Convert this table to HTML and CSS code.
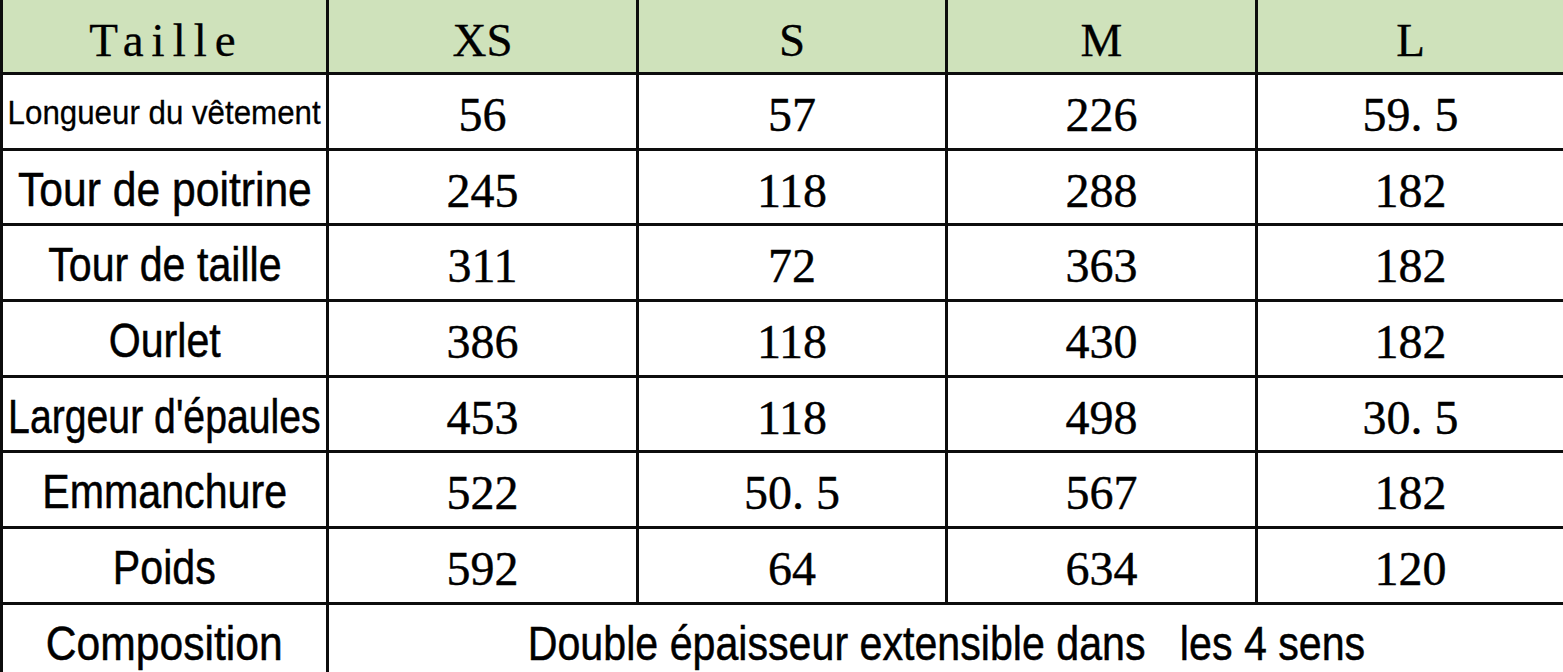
FILE: index.html
```html
<!DOCTYPE html>
<html lang="fr">
<head>
<meta charset="utf-8">
<title>Tableau des tailles</title>
<link rel="stylesheet" href="styles.css">
</head>
<body>
<div class="sheet">
  <div class="cell head label-head">Taille</div>
  <div class="cell head">XS</div>
  <div class="cell head">S</div>
  <div class="cell head">M</div>
  <div class="cell head">L</div>

  <div class="cell label small"><span class="txt">Longueur du vêtement</span></div>
  <div class="cell num">56</div>
  <div class="cell num">57</div>
  <div class="cell num">226</div>
  <div class="cell num">59. 5</div>

  <div class="cell label"><span class="txt wide">Tour de poitrine</span></div>
  <div class="cell num">245</div>
  <div class="cell num">118</div>
  <div class="cell num">288</div>
  <div class="cell num">182</div>

  <div class="cell label"><span class="txt">Tour de taille</span></div>
  <div class="cell num">311</div>
  <div class="cell num">72</div>
  <div class="cell num">363</div>
  <div class="cell num">182</div>

  <div class="cell label"><span class="txt">Ourlet</span></div>
  <div class="cell num">386</div>
  <div class="cell num">118</div>
  <div class="cell num">430</div>
  <div class="cell num">182</div>

  <div class="cell label"><span class="txt tight">Largeur d'épaules</span></div>
  <div class="cell num">453</div>
  <div class="cell num">118</div>
  <div class="cell num">498</div>
  <div class="cell num">30. 5</div>

  <div class="cell label"><span class="txt">Emmanchure</span></div>
  <div class="cell num">522</div>
  <div class="cell num">50. 5</div>
  <div class="cell num">567</div>
  <div class="cell num">182</div>

  <div class="cell label"><span class="txt">Poids</span></div>
  <div class="cell num">592</div>
  <div class="cell num">64</div>
  <div class="cell num">634</div>
  <div class="cell num">120</div>

  <div class="cell label"><span class="txt wide">Composition</span></div>
  <div class="cell label span4"><span class="txt">Double épaisseur extensible dans&nbsp;&nbsp; les 4 sens</span></div>
</div>
</body>
</html>
```
FILE: styles.css
```css
html, body {
  margin: 0;
  padding: 0;
  background: #ffffff;
  overflow: hidden;
}

.sheet {
  display: grid;
  grid-template-columns: 323px 307px 306px 307px 305px;
  grid-template-rows: 72px repeat(8, 72.7px);
  column-gap: 3px;
  row-gap: 3px;
  padding-left: 3px;
  background: #0d0d0d;
  width: 1560px;
}

.cell {
  background: #ffffff;
  color: #000000;
  display: flex;
  align-items: center;
  justify-content: center;
  white-space: nowrap;
  overflow: hidden;
}

.head {
  background: #cfe2bb;
  font-family: "Liberation Serif", "Times New Roman", serif;
  font-size: 47px;
  padding-top: 8px;
  box-sizing: border-box;
  -webkit-text-stroke: 0.3px #000;
}

.label-head {
  letter-spacing: 8px;
  padding-left: 4px;
}

.num {
  font-family: "Liberation Serif", "Times New Roman", serif;
  font-size: 48px;
  padding-top: 6px;
  box-sizing: border-box;
  -webkit-text-stroke: 0.4px #000;
}

.label {
  font-family: "Liberation Sans", Arial, sans-serif;
  font-size: 49px;
  padding-top: 3px;
  box-sizing: border-box;
  -webkit-text-stroke: 0.5px #000;
}

.txt {
  display: inline-block;
  transform: scaleX(0.84);
}

.txt.wide {
  transform: scaleX(0.87);
}

.txt.tight {
  transform: scaleX(0.80);
}

.small {
  font-size: 34px;
  -webkit-text-stroke: 0.3px #000;
}

.small .txt {
  transform: scaleX(0.92);
}

.span4 {
  grid-column: 2 / span 4;
}
```
